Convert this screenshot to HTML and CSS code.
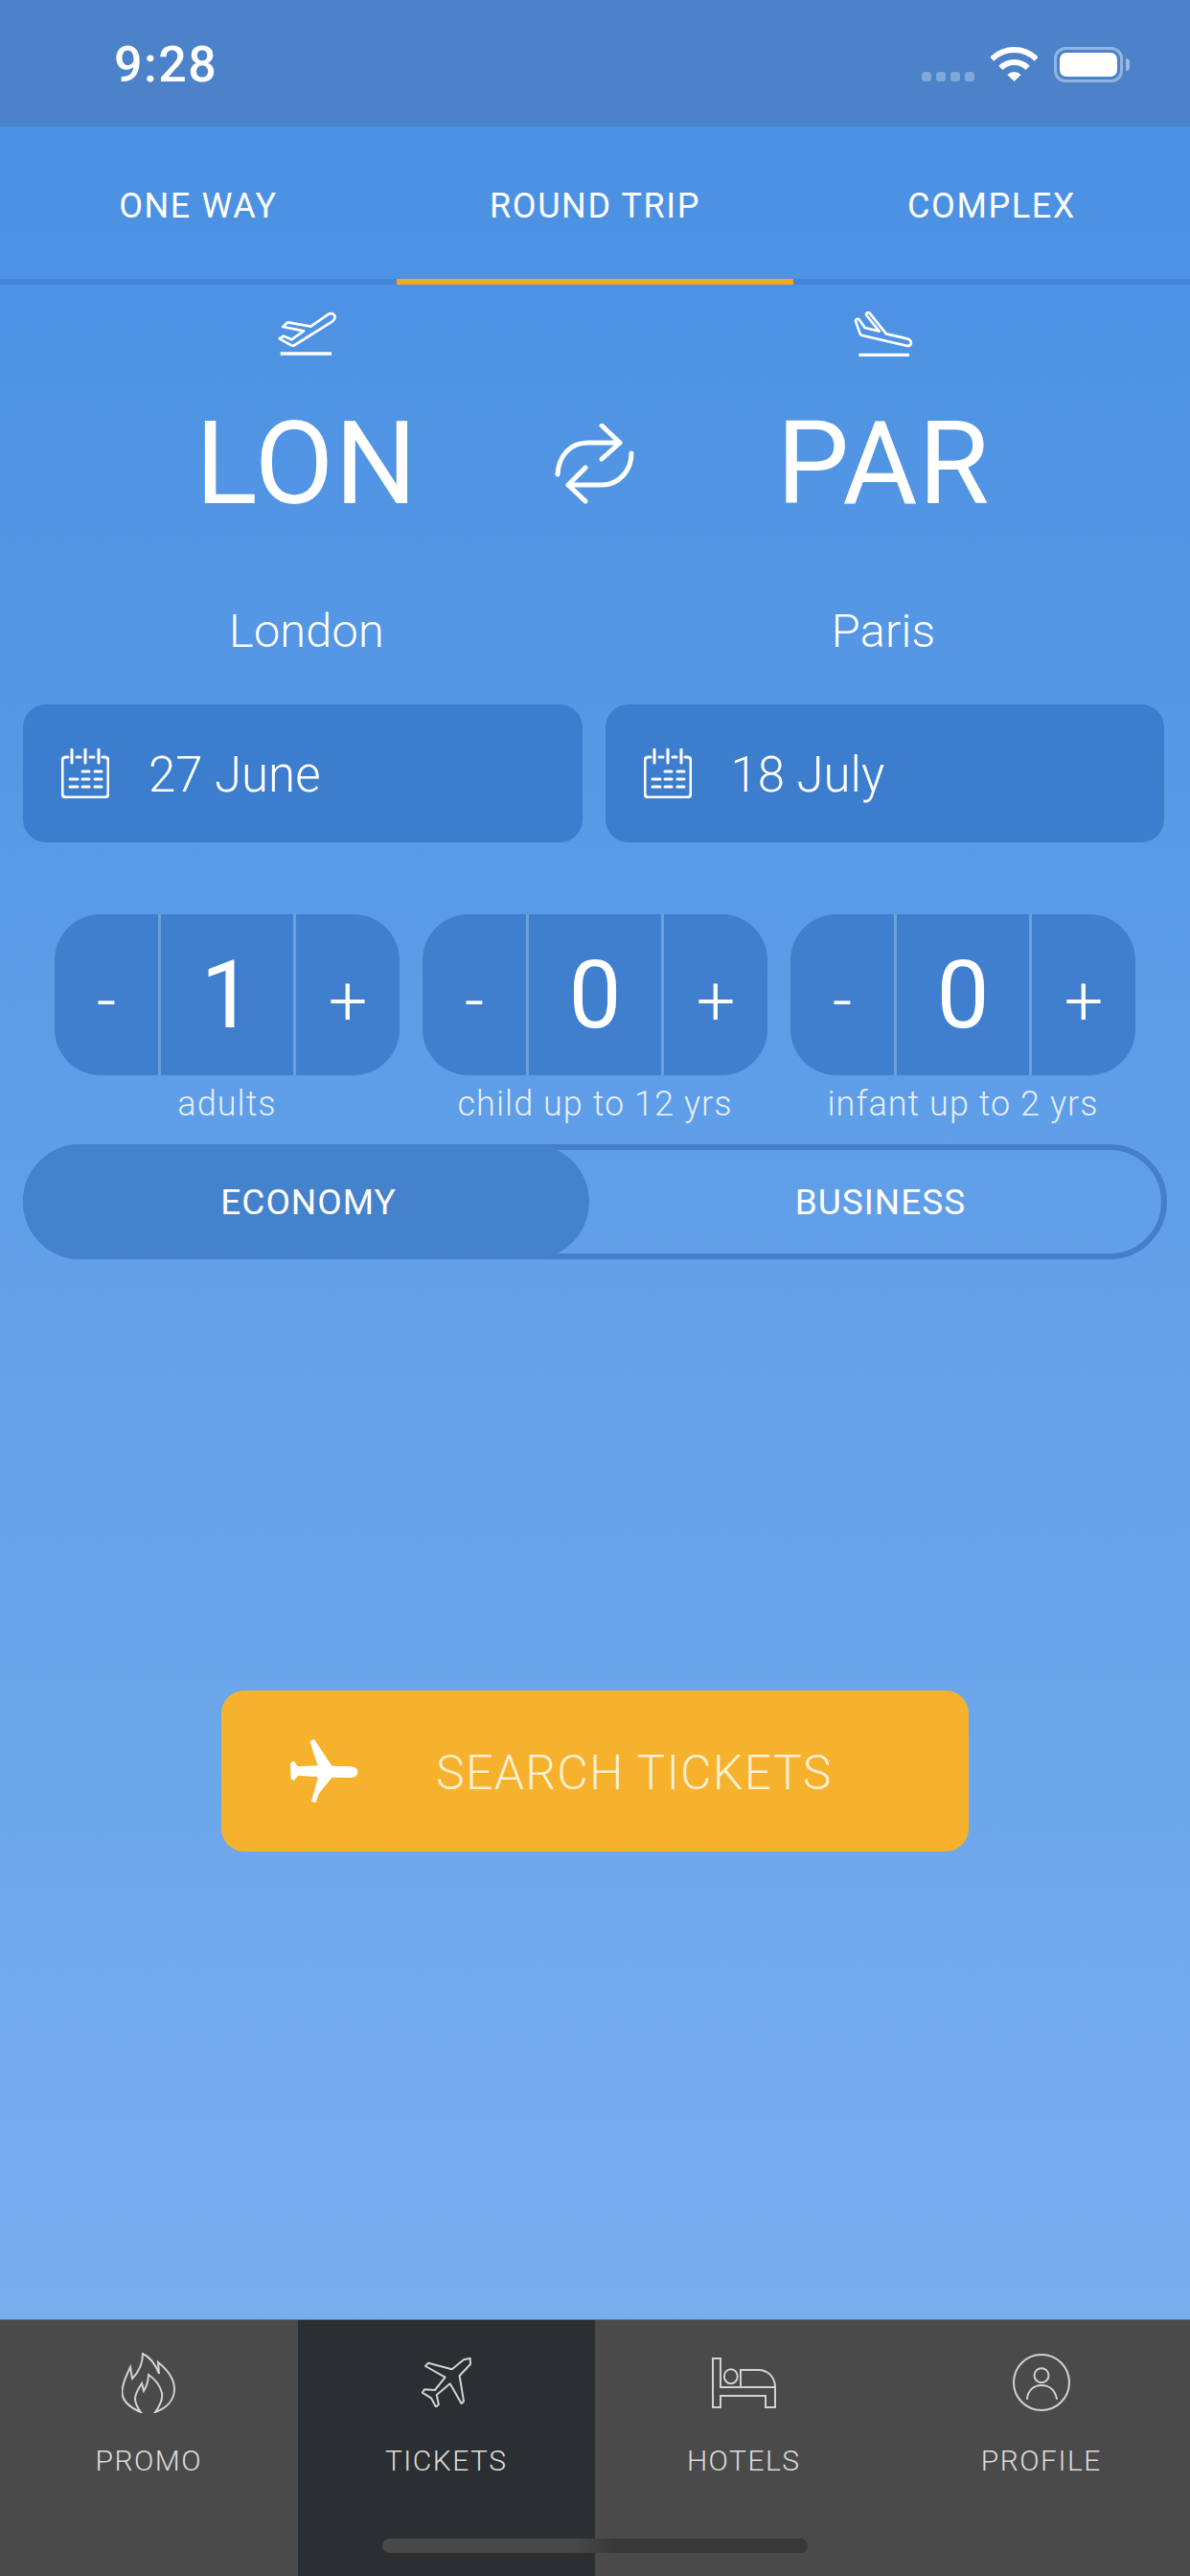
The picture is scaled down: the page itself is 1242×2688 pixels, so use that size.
FILE: index.html
```html
<!DOCTYPE html>
<html lang="en">
<head>
  <meta charset="UTF-8" />
  <meta name="viewport" content="width=device-width, initial-scale=1.0" />
  <title>Flight Search</title>
  <link rel="stylesheet" href="styles.css">
</head>
<body>
  <div class="page">
    <div class="status-bar">
      <span class="time">9:28</span>
      <div class="status-icons">
        <div class="signal"><i></i><i></i><i></i><i></i></div>
        <svg class="wifi" viewBox="0 0 49 36" width="49" height="36">
          <path d="M1.2 12.7A33 33 0 0 1 47.8 12.7M10.4 21.9A20 20 0 0 1 38.6 21.9" fill="none" stroke="#fff" stroke-width="6" />
          <path d="M24.5 36L17.4 28.9A10 10 0 0 1 31.6 28.9Z" fill="#fff" />
        </svg>
        <div class="battery"><div class="battery-fill"></div></div>
        <div class="battery-nub"></div>
      </div>
    </div>

    <main class="main">
      <div class="tabs">
        <div class="tab">ONE WAY</div>
        <div class="tab active">ROUND TRIP</div>
        <div class="tab">COMPLEX</div>
      </div>

      <div class="route">
        <div class="airport">
          <svg class="airport-icon" viewBox="84 45 186 141" width="62" height="47" fill="none" stroke="#fff" stroke-linejoin="round" stroke-linecap="round">
            <path stroke-width="8" d="M190 92L243 55Q258 46 265 58Q268 68 258 76L140 150Q133 154 127 150L92 130L105 122L130 133L168 106L103 93L118 79Z" />
            <path stroke-width="10" stroke-linecap="butt" d="M95 177H255" />
          </svg>
          <div class="code">LON</div>
          <div class="city">London</div>
        </div>
        <svg class="swap" viewBox="580 442 84 84" width="84" height="84" fill="none" stroke="#fff" stroke-width="5" stroke-linecap="round" stroke-linejoin="round">
          <path d="M629 444L648 462L629 479M648 462H614C596 462 584 476 583 495" />
          <path d="M612 488L594 506L612 523M594 506H629C647 506 660 491 660 473" />
        </svg>
        <div class="airport">
          <svg class="airport-icon" viewBox="66 45 186 141" width="62" height="47" fill="none" stroke="#fff" stroke-linejoin="round" stroke-linecap="round">
            <path stroke-width="8" d="M115 49L168 115L236 131Q248 135 245 147Q242 155 230 152L92 120Q86 118 85 112L72 75Q72 67 82 69L101 96L146 107L106 57Q103 47 115 49Z" />
            <path stroke-width="10" stroke-linecap="butt" d="M82 181H240" />
          </svg>
          <div class="code">PAR</div>
          <div class="city">Paris</div>
        </div>
      </div>

      <div class="dates">
        <div class="date-card">
          <svg class="calendar" viewBox="0 0 50 52" width="50" height="52" fill="none" stroke="#fff" stroke-width="3" stroke-linecap="round">
            <path d="M7 9H5Q1 9 1 13V47Q1 51 5 51H45Q49 51 49 47V13Q49 9 45 9H43" />
            <path d="M11 1V15M25 1V15M39 1V15M16 9H20M30 9H34" />
            <path d="M22 24H29M35 24H42M9 32H17M22 32H29M35 32H42M9 40H17M22 40H29M35 40H42" />
          </svg>
          <span>27 June</span>
        </div>
        <div class="date-card">
          <svg class="calendar" viewBox="0 0 50 52" width="50" height="52" fill="none" stroke="#fff" stroke-width="3" stroke-linecap="round">
            <path d="M7 9H5Q1 9 1 13V47Q1 51 5 51H45Q49 51 49 47V13Q49 9 45 9H43" />
            <path d="M11 1V15M25 1V15M39 1V15M16 9H20M30 9H34" />
            <path d="M22 24H29M35 24H42M9 32H17M22 32H29M35 32H42M9 40H17M22 40H29M35 40H42" />
          </svg>
          <span>18 July</span>
        </div>
      </div>

      <div class="passengers">
        <div class="passenger">
          <div class="counter">
            <div class="step">-</div>
            <div class="count">1</div>
            <div class="step">+</div>
          </div>
          <div class="passenger-label">adults</div>
        </div>
        <div class="passenger">
          <div class="counter">
            <div class="step">-</div>
            <div class="count">0</div>
            <div class="step">+</div>
          </div>
          <div class="passenger-label">child up to 12 yrs</div>
        </div>
        <div class="passenger">
          <div class="counter">
            <div class="step">-</div>
            <div class="count">0</div>
            <div class="step">+</div>
          </div>
          <div class="passenger-label">infant up to 2 yrs</div>
        </div>
      </div>

      <div class="cabin">
        <div class="cabin-option selected">ECONOMY</div>
        <div class="cabin-option">BUSINESS</div>
      </div>

      <div class="search-btn">
        <svg class="search-icon" viewBox="0 0 71 67" width="71" height="67">
          <path fill="#fff" d="M20.4 1.7L25 0L43.4 27.7L62.8 28.3Q70.4 29 70.4 34Q70.4 39.5 62.8 40L43.4 39.7L29.6 57L26.5 66.3L22 64.7L29 39.3L8.2 37.7L4 42.7L0.5 41L0 24.3L4 22.7L7.7 28.3L28.6 27.3Z" />
        </svg>
        <span>SEARCH TICKETS</span>
      </div>
    </main>

    <nav class="bottom-nav">
      <div class="nav-item">
        <div class="nav-icon">
          <svg viewBox="0 0 56 63" width="56" height="63" fill="none" stroke="#d2d2d2" stroke-width="2">
            <path d="M20 62C8 57 0 50 .5 40C1 30 6 22 9 15L11 27C18 20 22 10 22 1C30 5 36 14 39 22L38 10C48 18 55 28 55 38C55 50 46 58 35 62C41 54 43 48 42 42C40 34 34 27 28 23C28 29 26 35 23 40L21 32C17 38 14 43 14 48C14 54 17 58 20 62Z" />
          </svg>
        </div>
        <div class="nav-label">PROMO</div>
      </div>
      <div class="nav-item active">
        <div class="nav-icon">
          <svg viewBox="0 0 52 52" width="52" height="52" fill="none" stroke="#d2d2d2" stroke-width="2" stroke-linejoin="round">
            <path d="M50.7 .7L51 7L39.6 19L44 45.7L41.6 48L29.7 27.3L15.8 39L17.8 49L15 51.7L10 42.3L.8 36.7L3 33.3L13.9 34L24.6 20.7L4 9L7 5.7L31.7 12.3L44 2.3Z" />
          </svg>
        </div>
        <div class="nav-label">TICKETS</div>
      </div>
      <div class="nav-item">
        <div class="nav-icon">
          <svg viewBox="0 0 67 53" width="67" height="53" fill="none" stroke="#d2d2d2" stroke-width="2">
            <path d="M1 1H9V31H66V52H56V40H9V52H1Z" />
            <path d="M30 31V13H48.5C58 13 66 20 66 31" />
            <ellipse cx="19.8" cy="19.7" rx="7" ry="7.5" />
          </svg>
        </div>
        <div class="nav-label">HOTELS</div>
      </div>
      <div class="nav-item">
        <div class="nav-icon">
          <svg viewBox="0 0 60 60" width="60" height="60" fill="none" stroke="#d2d2d2" stroke-width="2" stroke-linecap="round">
            <circle cx="30" cy="30" r="29" />
            <circle cx="30" cy="22.7" r="7.5" />
            <path d="M15 47C16 38 22 33 30 33C38 33 44 38 46 47" />
          </svg>
        </div>
        <div class="nav-label">PROFILE</div>
      </div>
      <div class="home-bar"></div>
    </nav>
  </div>
</body>
</html>
```

FILE: styles.css
```css
* {
  box-sizing: border-box;
}
body {
  margin: 0;
  font-family: Roboto, "Liberation Sans", sans-serif;
  color: #fff;
}
.page {
  display: flex;
  flex-direction: column;
  height: 2688px;
  overflow: hidden;
}

/* status bar */
.status-bar {
  height: 132px;
  flex-shrink: 0;
  background: #4c82c9;
  display: flex;
  justify-content: space-between;
  padding: 41px 63px 0 119px;
}
.time {
  font-size: 52px;
  line-height: 54px;
  font-weight: 500;
  letter-spacing: 1.5px;
}
.status-icons {
  display: flex;
  align-items: flex-start;
  padding-top: 8px;
}
.signal {
  display: flex;
  gap: 5px;
  margin-top: 26px;
  margin-right: 17px;
}
.signal i {
  width: 10px;
  height: 10px;
  border-radius: 3px;
  background: rgba(255, 255, 255, 0.3);
}
.battery {
  width: 72px;
  height: 37px;
  margin-left: 17px;
  padding: 3px;
  border: 3px solid rgba(255, 255, 255, 0.4);
  border-radius: 12px;
}
.battery-fill {
  height: 100%;
  background: #fff;
  border-radius: 7px;
}
.battery-nub {
  width: 4px;
  height: 13px;
  margin: 12px 0 0 3px;
  background: rgba(255, 255, 255, 0.45);
  border-radius: 0 4px 4px 0;
}

/* main area */
.main {
  flex: 1;
  background: linear-gradient(to bottom, #4a90e2, #78aeee);
}
.tabs {
  display: flex;
  height: 165px;
  border-bottom: 6px solid #4385d8;
}
.tab {
  flex: 1;
  display: flex;
  align-items: center;
  justify-content: center;
  height: 165px;
  padding-top: 6px;
  font-size: 36px;
  letter-spacing: 1.6px;
  border-bottom: 6px solid transparent;
}
.tab.active {
  border-bottom-color: #f5a623;
}

.route {
  display: flex;
  justify-content: space-between;
  padding: 0 120px;
}
.airport {
  width: 400px;
  display: flex;
  flex-direction: column;
  align-items: center;
}
.airport-icon {
  display: block;
  margin-top: 28px;
}
.code {
  margin-top: 52px;
  font-size: 120px;
  line-height: 120px;
  letter-spacing: 1px;
}
.city {
  margin-top: 85px;
  font-size: 49px;
  line-height: 60px;
  font-weight: 300;
}
.swap {
  margin-top: 145px;
}

.dates {
  display: flex;
  gap: 24px;
  padding: 0 27px 0 24px;
  margin-top: 46px;
}
.date-card {
  flex: 1;
  height: 144px;
  display: flex;
  align-items: center;
  gap: 41px;
  padding-left: 40px;
  background: #3d7dcd;
  border-radius: 24px;
  font-size: 51px;
  font-weight: 300;
}
.date-card span {
  padding-top: 2px;
}
.calendar {
  flex-shrink: 0;
}

.passengers {
  display: flex;
  gap: 24px;
  padding: 0 57px;
  margin-top: 75px;
}
.passenger {
  flex: 1;
}
.counter {
  display: flex;
  height: 168px;
  background: #3f7fcd;
  border-radius: 48px;
  overflow: hidden;
}
.step {
  width: 108px;
  display: flex;
  align-items: center;
  justify-content: center;
  padding-top: 12px;
  font-size: 72px;
  font-weight: 300;
}
.count {
  flex: 1;
  display: flex;
  align-items: center;
  justify-content: center;
  border-left: 3px solid #6a9fe0;
  border-right: 3px solid #6a9fe0;
  font-size: 98px;
}
.passenger-label {
  margin-top: 8px;
  text-align: center;
  font-size: 36px;
  line-height: 44px;
  font-weight: 300;
  letter-spacing: 1.05px;
  color: rgba(255, 255, 255, 0.85);
}

.cabin {
  display: flex;
  height: 120px;
  margin: 20px 24px 0;
  border: 6px solid #437fcb;
  border-radius: 60px;
}
.cabin-option {
  flex: 1;
  display: flex;
  align-items: center;
  justify-content: center;
  padding-left: 11px;
  font-size: 37px;
  letter-spacing: 1px;
}
.cabin-option.selected {
  flex: 0 0 591px;
  margin: -6px 0 -6px -6px;
  padding-left: 5px;
  background: #4582cc;
  border-radius: 60px;
}

.search-btn {
  display: flex;
  align-items: center;
  width: 780px;
  height: 168px;
  margin: 450px auto 0;
  padding-left: 72px;
  background: #f6b22c;
  border-radius: 24px;
}
.search-btn span {
  margin-left: 81px;
  padding-top: 3px;
  font-size: 50px;
  font-weight: 300;
  letter-spacing: 1.3px;
  color: rgba(255, 255, 255, 0.8);
}

/* bottom navigation */
.bottom-nav {
  position: relative;
  display: flex;
  height: 268px;
  flex-shrink: 0;
  background: #4a4a4a;
  border-top: 1px solid #4a78b0;
}
.nav-item {
  flex: 1;
  padding-top: 34px;
  text-align: center;
}
.nav-item.active {
  background: #2c2f31;
}
.nav-icon {
  display: flex;
  align-items: center;
  justify-content: center;
  height: 62px;
}
.nav-label {
  margin-top: 31px;
  font-size: 30px;
  line-height: 40px;
  font-weight: 300;
  letter-spacing: 1.5px;
  color: #dcdcdc;
}
.home-bar {
  position: absolute;
  left: 399px;
  top: 228px;
  width: 444px;
  height: 15px;
  border-radius: 8px;
  background: linear-gradient(to right, #484848 0 45%, #383838 55% 100%);
}
```
